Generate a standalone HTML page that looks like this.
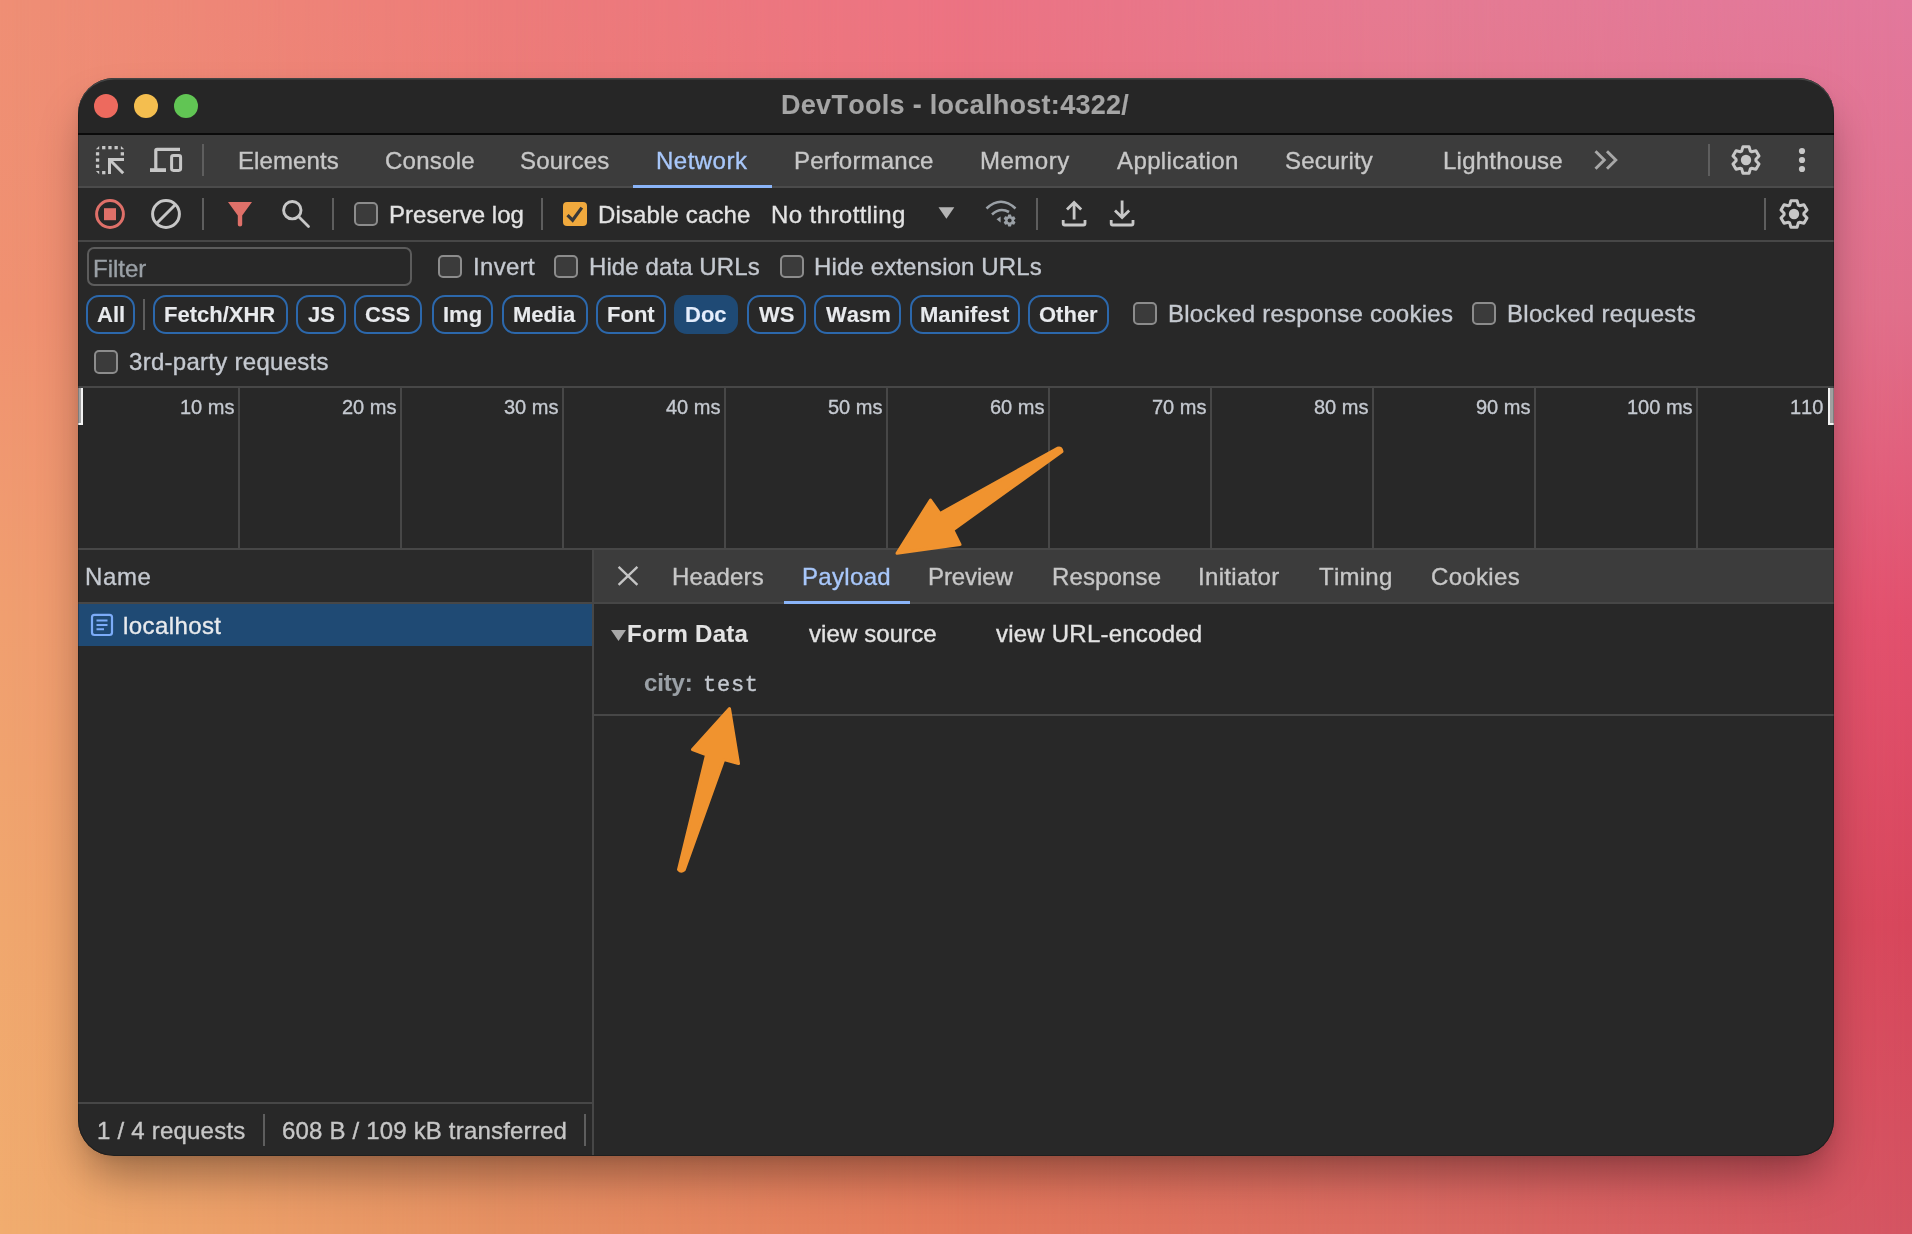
<!DOCTYPE html>
<html><head><meta charset="utf-8"><title>DevTools</title>
<style>
html,body{margin:0;padding:0;width:1912px;height:1234px;overflow:hidden;}
body{position:relative;font-family:"Liberation Sans", sans-serif;font-kerning:none;background:#e8866f;}
.bg{position:absolute;left:0;top:0;width:1912px;height:1234px;}
.q{position:absolute;}
.q::after{content:"";position:absolute;inset:0;background:var(--r);-webkit-mask-image:linear-gradient(to right,transparent,#000);mask-image:linear-gradient(to right,transparent,#000);}
.win{position:absolute;left:78px;top:78px;width:1756px;height:1078px;border-radius:36px;overflow:hidden;background:#282828;box-shadow:0 26px 45px -8px rgba(0,0,0,0.36),0 3px 8px rgba(0,0,0,0.05);}
.inner{position:absolute;left:-78px;top:-78px;width:1912px;height:1234px;}
.r{position:absolute;}
.t{position:absolute;white-space:pre;will-change:transform;-webkit-text-stroke:0.35px currentColor;}
.ov{position:absolute;left:0;top:0;}
.rim{position:absolute;left:78px;top:78px;width:1756px;height:1078px;border-radius:36px;box-shadow:inset 0 1.5px 0 rgba(255,255,255,0.17),inset 0 0 0 1px rgba(0,0,0,0.22);pointer-events:none;}
</style></head><body>
<div class="bg">
<div class="q" style="left:0px;top:0px;width:478px;height:308px;background:linear-gradient(to bottom,rgb(239,143,117),rgb(240,146,113));--r:linear-gradient(to bottom,rgb(237,124,122),rgb(236,127,113))"></div>
<div class="q" style="left:0px;top:308px;width:478px;height:309px;background:linear-gradient(to bottom,rgb(240,146,113),rgb(240,159,112));--r:linear-gradient(to bottom,rgb(236,127,113),rgb(235,131,104))"></div>
<div class="q" style="left:0px;top:617px;width:478px;height:308px;background:linear-gradient(to bottom,rgb(240,159,112),rgb(240,167,110));--r:linear-gradient(to bottom,rgb(235,131,104),rgb(231,136,97))"></div>
<div class="q" style="left:0px;top:925px;width:478px;height:309px;background:linear-gradient(to bottom,rgb(240,167,110),rgb(241,173,111));--r:linear-gradient(to bottom,rgb(231,136,97),rgb(230,146,99))"></div>
<div class="q" style="left:478px;top:0px;width:478px;height:308px;background:linear-gradient(to bottom,rgb(237,124,122),rgb(236,127,113));--r:linear-gradient(to bottom,rgb(236,115,131),rgb(235,115,119))"></div>
<div class="q" style="left:478px;top:308px;width:478px;height:309px;background:linear-gradient(to bottom,rgb(236,127,113),rgb(235,131,104));--r:linear-gradient(to bottom,rgb(235,115,119),rgb(235,108,102))"></div>
<div class="q" style="left:478px;top:617px;width:478px;height:308px;background:linear-gradient(to bottom,rgb(235,131,104),rgb(231,136,97));--r:linear-gradient(to bottom,rgb(235,108,102),rgb(229,110,90))"></div>
<div class="q" style="left:478px;top:925px;width:478px;height:309px;background:linear-gradient(to bottom,rgb(231,136,97),rgb(230,146,99));--r:linear-gradient(to bottom,rgb(229,110,90),rgb(227,122,92))"></div>
<div class="q" style="left:956px;top:0px;width:478px;height:308px;background:linear-gradient(to bottom,rgb(236,115,131),rgb(235,115,119));--r:linear-gradient(to bottom,rgb(229,123,147),rgb(227,118,133))"></div>
<div class="q" style="left:956px;top:308px;width:478px;height:309px;background:linear-gradient(to bottom,rgb(235,115,119),rgb(235,108,102));--r:linear-gradient(to bottom,rgb(227,118,133),rgb(228,98,109))"></div>
<div class="q" style="left:956px;top:617px;width:478px;height:308px;background:linear-gradient(to bottom,rgb(235,108,102),rgb(229,110,90));--r:linear-gradient(to bottom,rgb(228,98,109),rgb(220,93,94))"></div>
<div class="q" style="left:956px;top:925px;width:478px;height:309px;background:linear-gradient(to bottom,rgb(229,110,90),rgb(227,122,92));--r:linear-gradient(to bottom,rgb(220,93,94),rgb(218,106,98))"></div>
<div class="q" style="left:1434px;top:0px;width:478px;height:308px;background:linear-gradient(to bottom,rgb(229,123,147),rgb(227,118,133));--r:linear-gradient(to bottom,rgb(226,120,156),rgb(224,111,139))"></div>
<div class="q" style="left:1434px;top:308px;width:478px;height:309px;background:linear-gradient(to bottom,rgb(227,118,133),rgb(228,98,109));--r:linear-gradient(to bottom,rgb(224,111,139),rgb(226,80,110))"></div>
<div class="q" style="left:1434px;top:617px;width:478px;height:308px;background:linear-gradient(to bottom,rgb(228,98,109),rgb(220,93,94));--r:linear-gradient(to bottom,rgb(226,80,110),rgb(215,70,92))"></div>
<div class="q" style="left:1434px;top:925px;width:478px;height:309px;background:linear-gradient(to bottom,rgb(220,93,94),rgb(218,106,98));--r:linear-gradient(to bottom,rgb(215,70,92),rgb(212,84,98))"></div>
</div>
<div class="win"><div class="inner">
<div class="r" style="left:78px;top:78px;width:1756px;height:56px;background:#262626;"></div>
<div class="r" style="left:78px;top:133px;width:1756px;height:2px;background:#0a0a0a;"></div>
<div class="r" style="left:94px;top:94px;width:24px;height:24px;background:#ed6a5e;border-radius:50%;"></div>
<div class="r" style="left:134px;top:94px;width:24px;height:24px;background:#f4be4f;border-radius:50%;"></div>
<div class="r" style="left:174px;top:94px;width:24px;height:24px;background:#61c554;border-radius:50%;"></div>
<div class="t" style="left:781.39px;top:86.04px;font-size:27px;line-height:38px;color:#a5a5a5;font-weight:700;-webkit-text-stroke:0.1px currentColor;letter-spacing:0.291px;">DevTools - localhost:4322/</div>
<div class="r" style="left:78px;top:135px;width:1756px;height:51px;background:#3c3c3c;"></div>
<div class="r" style="left:78px;top:186px;width:1756px;height:2px;background:#4b4b4b;"></div>
<div class="t" style="left:238.23px;top:144.08px;font-size:24px;line-height:34px;color:#c7c7c7;letter-spacing:0.085px;">Elements</div>
<div class="t" style="left:384.68px;top:144.08px;font-size:24px;line-height:34px;color:#c7c7c7;letter-spacing:0.272px;">Console</div>
<div class="t" style="left:520.31px;top:144.08px;font-size:24px;line-height:34px;color:#c7c7c7;letter-spacing:0.219px;">Sources</div>
<div class="t" style="left:656.03px;top:144.08px;font-size:24px;line-height:34px;color:#a8c7fa;letter-spacing:0.486px;">Network</div>
<div class="t" style="left:794.43px;top:144.08px;font-size:24px;line-height:34px;color:#c7c7c7;letter-spacing:0.204px;">Performance</div>
<div class="t" style="left:979.63px;top:144.08px;font-size:24px;line-height:34px;color:#c7c7c7;letter-spacing:0.509px;">Memory</div>
<div class="t" style="left:1117.05px;top:144.08px;font-size:24px;line-height:34px;color:#c7c7c7;letter-spacing:0.390px;">Application</div>
<div class="t" style="left:1284.71px;top:144.08px;font-size:24px;line-height:34px;color:#c7c7c7;letter-spacing:0.149px;">Security</div>
<div class="t" style="left:1442.63px;top:144.08px;font-size:24px;line-height:34px;color:#c7c7c7;letter-spacing:0.245px;">Lighthouse</div>
<div class="r" style="left:633px;top:184.5px;width:139px;height:3px;background:#8ab4f8;"></div>
<div class="r" style="left:202px;top:144px;width:2px;height:32px;background:#5e5e5e;"></div>
<div class="r" style="left:1708px;top:144px;width:2px;height:32px;background:#5e5e5e;"></div>
<div class="r" style="left:78px;top:188px;width:1756px;height:52px;background:#282828;"></div>
<div class="r" style="left:78px;top:240px;width:1756px;height:2px;background:#474747;"></div>
<div class="r" style="left:202px;top:198px;width:2px;height:32px;background:#5e5e5e;"></div>
<div class="r" style="left:332px;top:198px;width:2px;height:32px;background:#5e5e5e;"></div>
<div class="r" style="left:541px;top:198px;width:2px;height:32px;background:#5e5e5e;"></div>
<div class="r" style="left:1036px;top:198px;width:2px;height:32px;background:#5e5e5e;"></div>
<div class="r" style="left:1764px;top:198px;width:2px;height:32px;background:#5e5e5e;"></div>
<div class="t" style="left:389.03px;top:197.78px;font-size:24px;line-height:34px;color:#e3e3e3;letter-spacing:0.017px;">Preserve log</div>
<div class="t" style="left:598.43px;top:197.78px;font-size:24px;line-height:34px;color:#e3e3e3;letter-spacing:0.140px;">Disable cache</div>
<div class="t" style="left:771.33px;top:197.78px;font-size:24px;line-height:34px;color:#e3e3e3;letter-spacing:0.418px;">No throttling</div>
<div class="r" style="left:354px;top:202px;width:24px;height:24px;background:#3b3b3b;box-sizing:border-box;border:2px solid #8c8c8c;border-radius:5px;"></div>
<div class="r" style="left:563px;top:202px;width:24px;height:24px;background:#f0a93d;border-radius:4px;"></div>
<div class="r" style="left:78px;top:242px;width:1756px;height:144px;background:#282828;"></div>
<div class="r" style="left:86.5px;top:246.5px;width:325px;height:39px;background:transparent;box-sizing:border-box;border:2px solid #5c5c5c;border-radius:7px;"></div>
<div class="t" style="left:92.63px;top:251.98px;font-size:24px;line-height:34px;color:#9aa0a6;">Filter</div>
<div class="r" style="left:438px;top:255px;width:24px;height:23px;background:#3b3b3b;box-sizing:border-box;border:2px solid #8c8c8c;border-radius:5px;"></div>
<div class="r" style="left:554px;top:255px;width:24px;height:23px;background:#3b3b3b;box-sizing:border-box;border:2px solid #8c8c8c;border-radius:5px;"></div>
<div class="r" style="left:780px;top:255px;width:24px;height:23px;background:#3b3b3b;box-sizing:border-box;border:2px solid #8c8c8c;border-radius:5px;"></div>
<div class="t" style="left:472.59px;top:249.98px;font-size:24px;line-height:34px;color:#c5c9d0;letter-spacing:0.313px;">Invert</div>
<div class="t" style="left:589.13px;top:249.98px;font-size:24px;line-height:34px;color:#c5c9d0;letter-spacing:0.094px;">Hide data URLs</div>
<div class="t" style="left:814.43px;top:249.98px;font-size:24px;line-height:34px;color:#c5c9d0;letter-spacing:0.127px;">Hide extension URLs</div>
<div class="r" style="left:86px;top:295px;width:49px;height:39px;background:transparent;box-sizing:border-box;border:2px solid #2c68ac;border-radius:13px;"></div>
<div class="t" style="left:96.95px;top:299.07px;font-size:22px;line-height:31px;color:#e8eaed;font-weight:700;-webkit-text-stroke:0.1px currentColor;">All</div>
<div class="r" style="left:153px;top:295px;width:135px;height:39px;background:transparent;box-sizing:border-box;border:2px solid #2c68ac;border-radius:13px;"></div>
<div class="t" style="left:164.37px;top:299.07px;font-size:22px;line-height:31px;color:#e8eaed;font-weight:700;-webkit-text-stroke:0.1px currentColor;">Fetch/XHR</div>
<div class="r" style="left:296px;top:295px;width:50px;height:39px;background:transparent;box-sizing:border-box;border:2px solid #2c68ac;border-radius:13px;"></div>
<div class="t" style="left:307.81px;top:299.07px;font-size:22px;line-height:31px;color:#e8eaed;font-weight:700;-webkit-text-stroke:0.1px currentColor;">JS</div>
<div class="r" style="left:354px;top:295px;width:68px;height:39px;background:transparent;box-sizing:border-box;border:2px solid #2c68ac;border-radius:13px;"></div>
<div class="t" style="left:365.36px;top:299.07px;font-size:22px;line-height:31px;color:#e8eaed;font-weight:700;-webkit-text-stroke:0.1px currentColor;">CSS</div>
<div class="r" style="left:432px;top:295px;width:61px;height:39px;background:transparent;box-sizing:border-box;border:2px solid #2c68ac;border-radius:13px;"></div>
<div class="t" style="left:442.94px;top:299.07px;font-size:22px;line-height:31px;color:#e8eaed;font-weight:700;-webkit-text-stroke:0.1px currentColor;">Img</div>
<div class="r" style="left:502px;top:295px;width:86px;height:39px;background:transparent;box-sizing:border-box;border:2px solid #2c68ac;border-radius:13px;"></div>
<div class="t" style="left:513.02px;top:299.07px;font-size:22px;line-height:31px;color:#e8eaed;font-weight:700;-webkit-text-stroke:0.1px currentColor;">Media</div>
<div class="r" style="left:596px;top:295px;width:70px;height:39px;background:transparent;box-sizing:border-box;border:2px solid #2c68ac;border-radius:13px;"></div>
<div class="t" style="left:606.58px;top:299.07px;font-size:22px;line-height:31px;color:#e8eaed;font-weight:700;-webkit-text-stroke:0.1px currentColor;">Font</div>
<div class="r" style="left:674px;top:295px;width:64px;height:39px;background:#1f4a75;border-radius:13px;"></div>
<div class="t" style="left:684.81px;top:299.07px;font-size:22px;line-height:31px;color:#e4edfc;font-weight:700;-webkit-text-stroke:0.1px currentColor;">Doc</div>
<div class="r" style="left:747px;top:295px;width:59px;height:39px;background:transparent;box-sizing:border-box;border:2px solid #2c68ac;border-radius:13px;"></div>
<div class="t" style="left:759.20px;top:299.07px;font-size:22px;line-height:31px;color:#e8eaed;font-weight:700;-webkit-text-stroke:0.1px currentColor;">WS</div>
<div class="r" style="left:814px;top:295px;width:87px;height:39px;background:transparent;box-sizing:border-box;border:2px solid #2c68ac;border-radius:13px;"></div>
<div class="t" style="left:825.77px;top:299.07px;font-size:22px;line-height:31px;color:#e8eaed;font-weight:700;-webkit-text-stroke:0.1px currentColor;">Wasm</div>
<div class="r" style="left:910px;top:295px;width:110px;height:39px;background:transparent;box-sizing:border-box;border:2px solid #2c68ac;border-radius:13px;"></div>
<div class="t" style="left:919.78px;top:299.07px;font-size:22px;line-height:31px;color:#e8eaed;font-weight:700;-webkit-text-stroke:0.1px currentColor;">Manifest</div>
<div class="r" style="left:1028px;top:295px;width:81px;height:39px;background:transparent;box-sizing:border-box;border:2px solid #2c68ac;border-radius:13px;"></div>
<div class="t" style="left:1038.88px;top:299.07px;font-size:22px;line-height:31px;color:#e8eaed;font-weight:700;-webkit-text-stroke:0.1px currentColor;">Other</div>
<div class="r" style="left:143px;top:298.5px;width:2px;height:31px;background:#5e5e5e;"></div>
<div class="r" style="left:1133px;top:302px;width:24px;height:23px;background:#3b3b3b;box-sizing:border-box;border:2px solid #8c8c8c;border-radius:5px;"></div>
<div class="r" style="left:1472px;top:302px;width:24px;height:23px;background:#3b3b3b;box-sizing:border-box;border:2px solid #8c8c8c;border-radius:5px;"></div>
<div class="t" style="left:1167.63px;top:296.98px;font-size:24px;line-height:34px;color:#c5c9d0;letter-spacing:0.266px;">Blocked response cookies</div>
<div class="t" style="left:1507.03px;top:296.98px;font-size:24px;line-height:34px;color:#c5c9d0;letter-spacing:0.302px;">Blocked requests</div>
<div class="r" style="left:94px;top:350px;width:24px;height:24px;background:#3b3b3b;box-sizing:border-box;border:2px solid #8c8c8c;border-radius:5px;"></div>
<div class="t" style="left:129.39px;top:345.18px;font-size:24px;line-height:34px;color:#c5c9d0;letter-spacing:0.278px;">3rd-party requests</div>
<div class="r" style="left:78px;top:386px;width:1756px;height:2px;background:#474747;"></div>
<div class="r" style="left:78px;top:388px;width:1756px;height:160px;background:#282828;"></div>
<div class="r" style="left:238px;top:388px;width:2px;height:160px;background:#474747;"></div>
<div class="t" style="left:179.96px;top:392.87px;font-size:20px;line-height:28px;color:#c5c9d0;">10 ms</div>
<div class="r" style="left:400px;top:388px;width:2px;height:160px;background:#474747;"></div>
<div class="t" style="left:341.96px;top:392.87px;font-size:20px;line-height:28px;color:#c5c9d0;">20 ms</div>
<div class="r" style="left:562px;top:388px;width:2px;height:160px;background:#474747;"></div>
<div class="t" style="left:503.96px;top:392.87px;font-size:20px;line-height:28px;color:#c5c9d0;">30 ms</div>
<div class="r" style="left:724px;top:388px;width:2px;height:160px;background:#474747;"></div>
<div class="t" style="left:665.96px;top:392.87px;font-size:20px;line-height:28px;color:#c5c9d0;">40 ms</div>
<div class="r" style="left:886px;top:388px;width:2px;height:160px;background:#474747;"></div>
<div class="t" style="left:827.96px;top:392.87px;font-size:20px;line-height:28px;color:#c5c9d0;">50 ms</div>
<div class="r" style="left:1048px;top:388px;width:2px;height:160px;background:#474747;"></div>
<div class="t" style="left:989.96px;top:392.87px;font-size:20px;line-height:28px;color:#c5c9d0;">60 ms</div>
<div class="r" style="left:1210px;top:388px;width:2px;height:160px;background:#474747;"></div>
<div class="t" style="left:1151.96px;top:392.87px;font-size:20px;line-height:28px;color:#c5c9d0;">70 ms</div>
<div class="r" style="left:1372px;top:388px;width:2px;height:160px;background:#474747;"></div>
<div class="t" style="left:1313.96px;top:392.87px;font-size:20px;line-height:28px;color:#c5c9d0;">80 ms</div>
<div class="r" style="left:1534px;top:388px;width:2px;height:160px;background:#474747;"></div>
<div class="t" style="left:1475.96px;top:392.87px;font-size:20px;line-height:28px;color:#c5c9d0;">90 ms</div>
<div class="r" style="left:1696px;top:388px;width:2px;height:160px;background:#474747;"></div>
<div class="t" style="left:1626.84px;top:392.87px;font-size:20px;line-height:28px;color:#c5c9d0;">100 ms</div>
<div class="t" style="left:1790.01px;top:392.87px;font-size:20px;line-height:28px;color:#c5c9d0;">110</div>
<div class="r" style="left:78px;top:388px;width:5px;height:37px;background:#a0a0a0;box-sizing:border-box;border-right:2px solid #f2f2f2;border-bottom:2px solid #f2f2f2;"></div>
<div class="r" style="left:1828px;top:388px;width:6px;height:37px;background:#a0a0a0;box-sizing:border-box;border-left:2px solid #f2f2f2;border-bottom:2px solid #f2f2f2;"></div>
<div class="r" style="left:78px;top:548px;width:1756px;height:2px;background:#474747;"></div>
<div class="r" style="left:78px;top:550px;width:514px;height:52px;background:#2a2a2a;"></div>
<div class="r" style="left:78px;top:602px;width:514px;height:2px;background:#474747;"></div>
<div class="r" style="left:78px;top:604px;width:514px;height:42px;background:#1f4a74;"></div>
<div class="r" style="left:78px;top:646px;width:514px;height:456px;background:#282828;"></div>
<div class="t" style="left:84.63px;top:559.68px;font-size:24px;line-height:34px;color:#c5c9d0;letter-spacing:0.605px;">Name</div>
<div class="t" style="left:122.68px;top:608.78px;font-size:24px;line-height:34px;color:#e8eaed;letter-spacing:0.409px;">localhost</div>
<div class="r" style="left:78px;top:1102px;width:514px;height:2px;background:#474747;"></div>
<div class="r" style="left:78px;top:1104px;width:514px;height:51px;background:#282828;"></div>
<div class="t" style="left:97.37px;top:1113.68px;font-size:24px;line-height:34px;color:#c7c7c7;letter-spacing:0.221px;">1 / 4 requests</div>
<div class="t" style="left:281.98px;top:1113.68px;font-size:24px;line-height:34px;color:#c7c7c7;letter-spacing:0.184px;">608 B / 109 kB transferred</div>
<div class="r" style="left:263px;top:1114px;width:2px;height:32px;background:#5e5e5e;"></div>
<div class="r" style="left:584px;top:1114px;width:2px;height:32px;background:#5e5e5e;"></div>
<div class="r" style="left:592px;top:550px;width:2px;height:605px;background:#474747;"></div>
<div class="r" style="left:594px;top:550px;width:1240px;height:52px;background:#3c3c3c;"></div>
<div class="r" style="left:594px;top:602px;width:1240px;height:2px;background:#474747;"></div>
<div class="r" style="left:594px;top:604px;width:1240px;height:551px;background:#282828;"></div>
<div class="t" style="left:672.13px;top:559.78px;font-size:24px;line-height:34px;color:#c7c7c7;letter-spacing:0.170px;">Headers</div>
<div class="t" style="left:802.03px;top:559.78px;font-size:24px;line-height:34px;color:#a8c7fa;letter-spacing:0.331px;">Payload</div>
<div class="t" style="left:928.13px;top:559.78px;font-size:24px;line-height:34px;color:#c7c7c7;letter-spacing:-0.092px;">Preview</div>
<div class="t" style="left:1052.43px;top:559.78px;font-size:24px;line-height:34px;color:#c7c7c7;letter-spacing:0.138px;">Response</div>
<div class="t" style="left:1198.09px;top:559.78px;font-size:24px;line-height:34px;color:#c7c7c7;letter-spacing:0.314px;">Initiator</div>
<div class="t" style="left:1318.76px;top:559.78px;font-size:24px;line-height:34px;color:#c7c7c7;letter-spacing:0.255px;">Timing</div>
<div class="t" style="left:1430.68px;top:559.78px;font-size:24px;line-height:34px;color:#c7c7c7;letter-spacing:0.330px;">Cookies</div>
<div class="r" style="left:784px;top:601px;width:126px;height:3px;background:#8ab4f8;"></div>
<div class="t" style="left:626.99px;top:617.18px;font-size:24px;line-height:34px;color:#e3e3e3;font-weight:700;-webkit-text-stroke:0.1px currentColor;letter-spacing:0.283px;">Form Data</div>
<div class="t" style="left:809.22px;top:617.18px;font-size:24px;line-height:34px;color:#e3e3e3;letter-spacing:0.093px;">view source</div>
<div class="t" style="left:996.32px;top:617.18px;font-size:24px;line-height:34px;color:#e3e3e3;letter-spacing:0.224px;">view URL-encoded</div>
<div class="t" style="left:643.76px;top:665.78px;font-size:24px;line-height:34px;color:#9aa0a6;font-weight:700;-webkit-text-stroke:0.1px currentColor;letter-spacing:-0.150px;">city:</div>
<div class="t" style="left:703.36px;top:669.75px;font-size:22px;line-height:31px;color:#c5c9d0;font-family:'Liberation Mono', monospace;letter-spacing:0.737px;">test</div>
<div class="r" style="left:594px;top:714px;width:1240px;height:2px;background:#474747;"></div>
</div></div>
<div class="rim"></div>
<svg class="ov" width="1912" height="1234" viewBox="0 0 1912 1234"><rect x="102.1" y="146.0" width="3.3" height="3.3" fill="#c7c7c7"/>
<rect x="108.3" y="146.0" width="3.3" height="3.3" fill="#c7c7c7"/>
<rect x="114.5" y="146.0" width="3.3" height="3.3" fill="#c7c7c7"/>
<rect x="95.9" y="152.2" width="3.3" height="3.3" fill="#c7c7c7"/>
<rect x="95.9" y="158.4" width="3.3" height="3.3" fill="#c7c7c7"/>
<rect x="95.9" y="164.6" width="3.3" height="3.3" fill="#c7c7c7"/>
<rect x="102.1" y="171.0" width="3.3" height="3.3" fill="#c7c7c7"/>
<rect x="120.7" y="152.2" width="3.3" height="3.3" fill="#c7c7c7"/>
<path d="M95.9,149.3 L99.2,146 V149.3 Z" fill="#c7c7c7"/>
<path d="M120.9,146 L124.2,149.3 H120.9 Z" fill="#c7c7c7"/>
<path d="M95.9,171 H99.2 L99.2,174.3 Z" fill="#c7c7c7"/>
<path d="M109.5,174 V159.5 H124 M110,160 L123.2,173.2" stroke="#c7c7c7" stroke-width="3" fill="none"/>
<path d="M155.8,170 V150.5 Q155.8,149.4 157,149.4 H180" stroke="#c7c7c7" stroke-width="3.2" fill="none"/>
<rect x="150" y="168.2" width="16" height="3.8" fill="#c7c7c7"/>
<rect x="171.6" y="155.6" width="9" height="14.8" rx="1.8" stroke="#c7c7c7" stroke-width="3" fill="none"/>
<path d="M1595.5,151.2 L1604.3,160 L1595.5,168.8 M1607,151.2 L1615.8,160 L1607,168.8" stroke="#a8a8a8" stroke-width="2.9" fill="none"/>
<path d="M1741.66,151.10 L1742.94,146.75 L1749.06,146.75 L1750.34,151.10 L1751.54,151.79 L1755.95,150.72 L1759.01,156.02 L1755.88,159.31 L1755.88,160.69 L1759.01,163.98 L1755.95,169.28 L1751.54,168.21 L1750.34,168.90 L1749.06,173.25 L1742.94,173.25 L1741.66,168.90 L1740.46,168.21 L1736.05,169.28 L1732.99,163.98 L1736.12,160.69 L1736.12,159.31 L1732.99,156.02 L1736.05,150.72 L1740.46,151.79Z" stroke="#c7c7c7" stroke-width="3" fill="none" stroke-linejoin="round"/>
<circle cx="1746" cy="160" r="5.2" fill="#c7c7c7"/>
<path d="M1789.66,205.10 L1790.94,200.75 L1797.06,200.75 L1798.34,205.10 L1799.54,205.79 L1803.95,204.72 L1807.01,210.02 L1803.88,213.31 L1803.88,214.69 L1807.01,217.98 L1803.95,223.28 L1799.54,222.21 L1798.34,222.90 L1797.06,227.25 L1790.94,227.25 L1789.66,222.90 L1788.46,222.21 L1784.05,223.28 L1780.99,217.98 L1784.12,214.69 L1784.12,213.31 L1780.99,210.02 L1784.05,204.72 L1788.46,205.79Z" stroke="#c7c7c7" stroke-width="3" fill="none" stroke-linejoin="round"/>
<circle cx="1794" cy="214" r="5.2" fill="#c7c7c7"/>
<circle cx="1802" cy="151" r="3.1" fill="#c7c7c7"/>
<circle cx="1802" cy="160" r="3.1" fill="#c7c7c7"/>
<circle cx="1802" cy="169" r="3.1" fill="#c7c7c7"/>
<circle cx="110" cy="214" r="13.4" stroke="#df7069" stroke-width="3" fill="none"/>
<rect x="104" y="208.2" width="12" height="12" fill="#df7069"/>
<circle cx="166" cy="214" r="13.4" stroke="#c7c7c7" stroke-width="3" fill="none"/>
<path d="M175.5,204.5 L156.5,223.5" stroke="#c7c7c7" stroke-width="3" fill="none"/>
<path d="M228,202 H252 L242.2,215.5 V224.5 Q242.2,226.5 240,226.5 Q237.8,226.5 237.8,224.5 V215.5 Z" fill="#df7069"/>
<circle cx="292.3" cy="210.2" r="8.7" stroke="#c7c7c7" stroke-width="2.9" fill="none"/>
<path d="M298.5,216.5 L308.5,226.5" stroke="#c7c7c7" stroke-width="2.8" fill="none" stroke-linecap="round"/>
<path d="M567.5,215.2 L572.6,220.2 L581.8,207.6" stroke="#383838" stroke-width="3.2" fill="none"/>
<path d="M938.5,207.3 H954.3 L946.4,218.8 Z" fill="#b4b4b4"/>
<path d="M986.5,208.5 Q1001,195 1015.5,208.5" stroke="#9aa0a6" stroke-width="2.6" fill="none"/>
<path d="M992,214.5 Q1000,207 1009,212" stroke="#9aa0a6" stroke-width="2.6" fill="none"/>
<path d="M996.5,219.2 L1000.6,216.5 L1000.6,222.6 Z" fill="#9aa0a6"/>
<path d="M1007.67,216.55 L1008.21,214.46 L1010.99,214.46 L1011.53,216.55 L1012.06,216.85 L1014.13,216.27 L1015.53,218.69 L1013.99,220.19 L1013.99,220.81 L1015.53,222.31 L1014.13,224.73 L1012.06,224.15 L1011.53,224.45 L1010.99,226.54 L1008.21,226.54 L1007.67,224.45 L1007.14,224.15 L1005.07,224.73 L1003.67,222.31 L1005.21,220.81 L1005.21,220.19 L1003.67,218.69 L1005.07,216.27 L1007.14,216.85Z" fill="#9aa0a6"/>
<circle cx="1009.6" cy="220.5" r="2" fill="#282828"/>
<path d="M1063.2,220 V223.5 Q1063.2,225 1064.7,225 H1083.5 Q1085,225 1085,223.5 V220" stroke="#c7c7c7" stroke-width="2.8" fill="none"/>
<path d="M1074.1,219.5 V202.5 M1067,209.5 L1074.1,202.4 L1081.2,209.5" stroke="#c7c7c7" stroke-width="2.8" fill="none"/>
<path d="M1111.2,220 V223.5 Q1111.2,225 1112.7,225 H1131.5 Q1133,225 1133,223.5 V220" stroke="#c7c7c7" stroke-width="2.8" fill="none"/>
<path d="M1122.1,200.5 V217.5 M1115,210.5 L1122.1,217.6 L1129.2,210.5" stroke="#c7c7c7" stroke-width="2.8" fill="none"/>
<rect x="92" y="614.8" width="20" height="20.2" rx="2.5" stroke="#7cacf8" stroke-width="2.2" fill="none"/>
<path d="M96.5,620.5 H107.5 M96.5,624.9 H107.5 M96.5,629.3 H104" stroke="#7cacf8" stroke-width="2" fill="none"/>
<path d="M618.6,566.9 L637.4,584.9 M637.4,566.9 L618.6,584.9" stroke="#c4c4c4" stroke-width="2.4" fill="none"/>
<path d="M611,630 H626 L618.5,641 Z" fill="#a8a8a8"/>
<path d="M897,553.2 L930.5,500 L940,513.5 L1057.5,448.2 Q1061.5,447 1062,451.5 L952.8,530 L960,544.5 Z" fill="#f0932f" stroke="#f0932f" stroke-width="3" stroke-linejoin="round"/>
<path d="M729.5,708.5 L738.5,763.5 L723.8,759.5 L684.3,869.8 Q681,872.5 678.5,869.5 L706.5,754.8 L692.5,749.5 Z" fill="#f0932f" stroke="#f0932f" stroke-width="3" stroke-linejoin="round"/></svg>
</body></html>
